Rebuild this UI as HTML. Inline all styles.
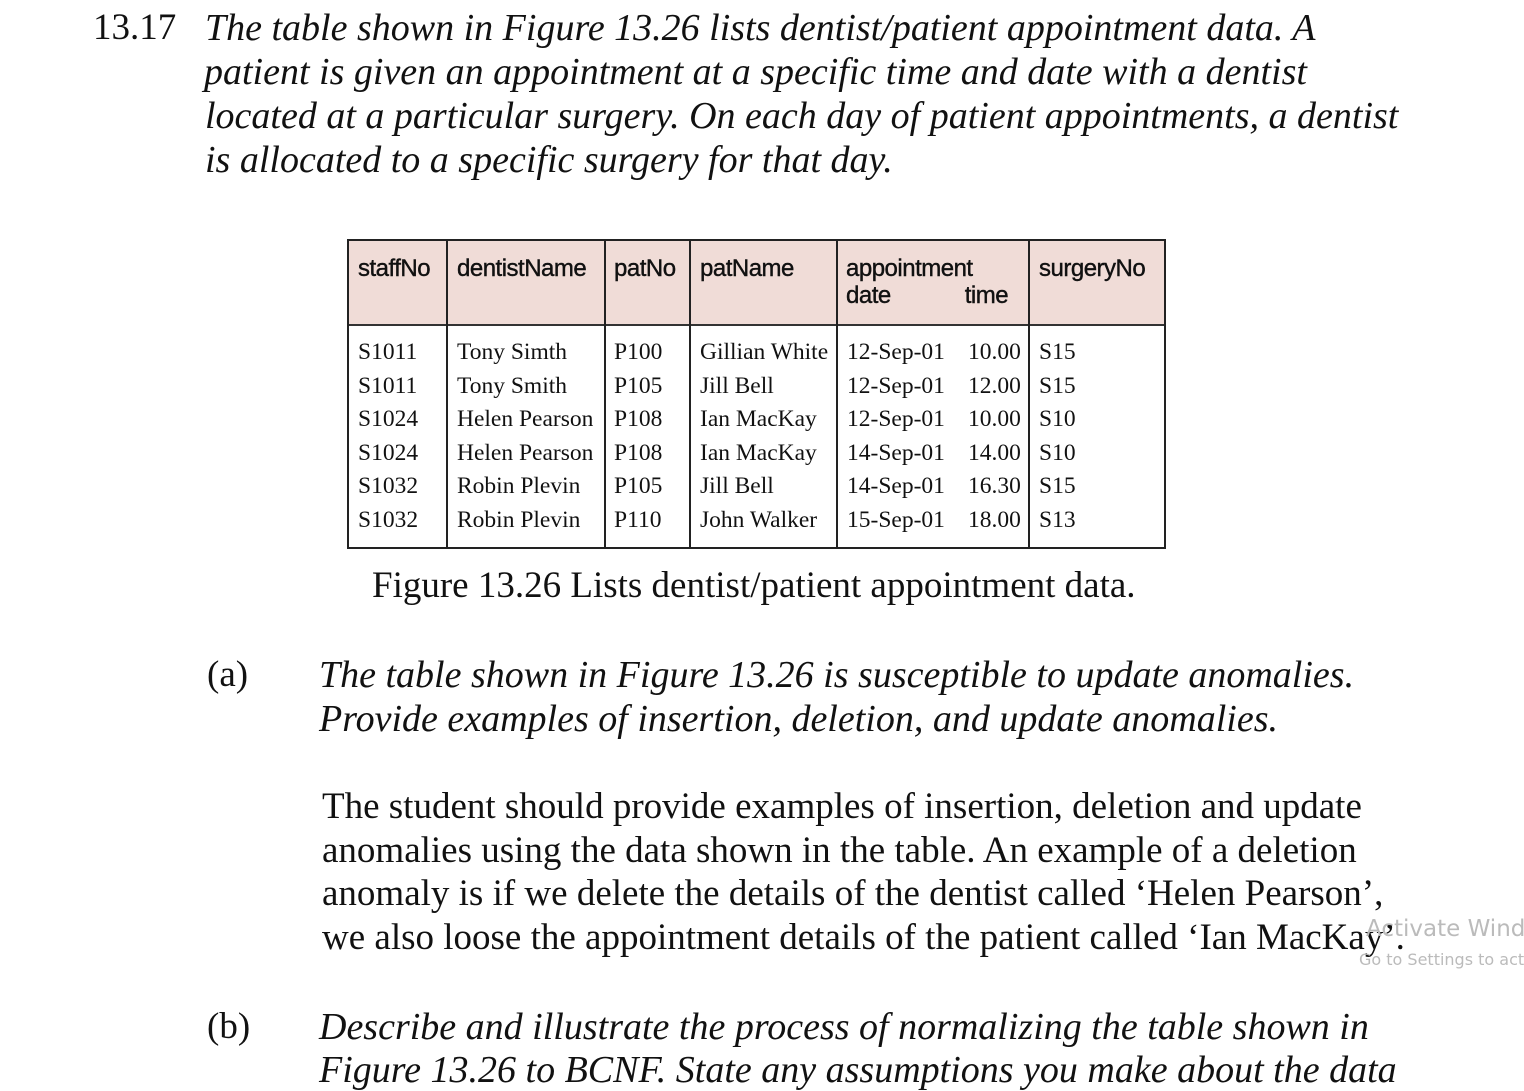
<!DOCTYPE html>
<html><head><meta charset="utf-8"><style>
body{margin:0;width:1524px;height:1079px;background:#fff;overflow:hidden;position:relative;font-family:"Liberation Serif",serif;color:#111}
.l{position:absolute;white-space:nowrap;line-height:40px}
.i{font-style:italic}
.t{position:absolute;left:347px;top:239px;width:815px;height:306px;border:2px solid #222;}
.hd{position:absolute;left:0;top:0;width:815px;height:83px;background:#f0dcd7;border-bottom:2px solid #333}
.v{position:absolute;top:0;width:2px;height:306px;background:#222}
.h{position:absolute;font-family:"Liberation Sans",sans-serif;font-size:24px;line-height:27px;top:14px;white-space:nowrap;letter-spacing:-0.5px;color:#111;-webkit-text-stroke:0.4px #111}
.c{position:absolute;font-size:23.5px;line-height:33.6px;top:95px;white-space:nowrap}
.wm{position:absolute;font-family:"DejaVu Sans",sans-serif;color:#bbb;white-space:nowrap}
</style></head><body>
<div class="l" style="left:93px;top:8px;font-size:37px">13.17</div>
<div class="l i" style="left:205px;top:8px;font-size:38px">The table shown in Figure 13.26 lists dentist/patient appointment data. A</div>
<div class="l i" style="left:204px;top:52px;font-size:38px">patient is given an appointment at a specific time and date with a dentist</div>
<div class="l i" style="left:205px;top:96px;font-size:38px">located at a particular surgery. On each day of patient appointments, a dentist</div>
<div class="l i" style="left:205px;top:140px;font-size:38px">is allocated to a specific surgery for that day.</div>

<div class="t">
<div class="hd"></div>
<div class="v" style="left:97px"></div><div class="v" style="left:255px"></div><div class="v" style="left:340px"></div><div class="v" style="left:487px"></div><div class="v" style="left:679px"></div>
<div class="h" style="left:9px">staffNo</div>
<div class="h" style="left:108px">dentistName</div>
<div class="h" style="left:265px">patNo</div>
<div class="h" style="left:351px">patName</div>
<div class="h" style="left:497px">appointment<br>date<span style="margin-left:74px">time</span></div>
<div class="h" style="left:690px">surgeryNo</div>
<div class="c" style="left:9px">S1011<br>S1011<br>S1024<br>S1024<br>S1032<br>S1032</div>
<div class="c" style="left:108px">Tony Simth<br>Tony Smith<br>Helen Pearson<br>Helen Pearson<br>Robin Plevin<br>Robin Plevin</div>
<div class="c" style="left:265px">P100<br>P105<br>P108<br>P108<br>P105<br>P110</div>
<div class="c" style="left:351px">Gillian White<br>Jill Bell<br>Ian MacKay<br>Ian MacKay<br>Jill Bell<br>John Walker</div>
<div class="c" style="left:498px">12-Sep-01<br>12-Sep-01<br>12-Sep-01<br>14-Sep-01<br>14-Sep-01<br>15-Sep-01</div>
<div class="c" style="left:619px">10.00<br>12.00<br>10.00<br>14.00<br>16.30<br>18.00</div>
<div class="c" style="left:690px">S15<br>S15<br>S10<br>S10<br>S15<br>S13</div>
</div>

<div class="l" style="left:372px;top:566px;font-size:37px">Figure 13.26 Lists dentist/patient appointment data.</div>

<div class="l" style="left:207px;top:655px;font-size:37px">(a)</div>
<div class="l i" style="left:319px;top:655px;font-size:38px">The table shown in Figure 13.26 is susceptible to update anomalies.</div>
<div class="l i" style="left:319px;top:699px;font-size:38px">Provide examples of insertion, deletion, and update anomalies.</div>

<div class="l" style="left:322px;top:787px;font-size:37px">The student should provide examples of insertion, deletion and update</div>
<div class="l" style="left:322px;top:831px;font-size:37px">anomalies using the data shown in the table. An example of a deletion</div>
<div class="l" style="left:322px;top:874px;font-size:37px">anomaly is if we delete the details of the dentist called ‘Helen Pearson’,</div>
<div class="l" style="left:322px;top:918px;font-size:37px">we also loose the appointment details of the patient called ‘Ian MacKay’.</div>

<div class="wm" style="left:1366px;top:916px;font-size:23px">Activate Windo</div>
<div class="wm" style="left:1359px;top:950px;font-size:16px">Go to Settings to act</div>

<div class="l" style="left:207px;top:1007px;font-size:37px">(b)</div>
<div class="l i" style="left:319px;top:1007px;font-size:38px">Describe and illustrate the process of normalizing the table shown in</div>
<div class="l i" style="left:319px;top:1050px;font-size:38px">Figure 13.26 to BCNF. State any assumptions you make about the data</div>
</body></html>
